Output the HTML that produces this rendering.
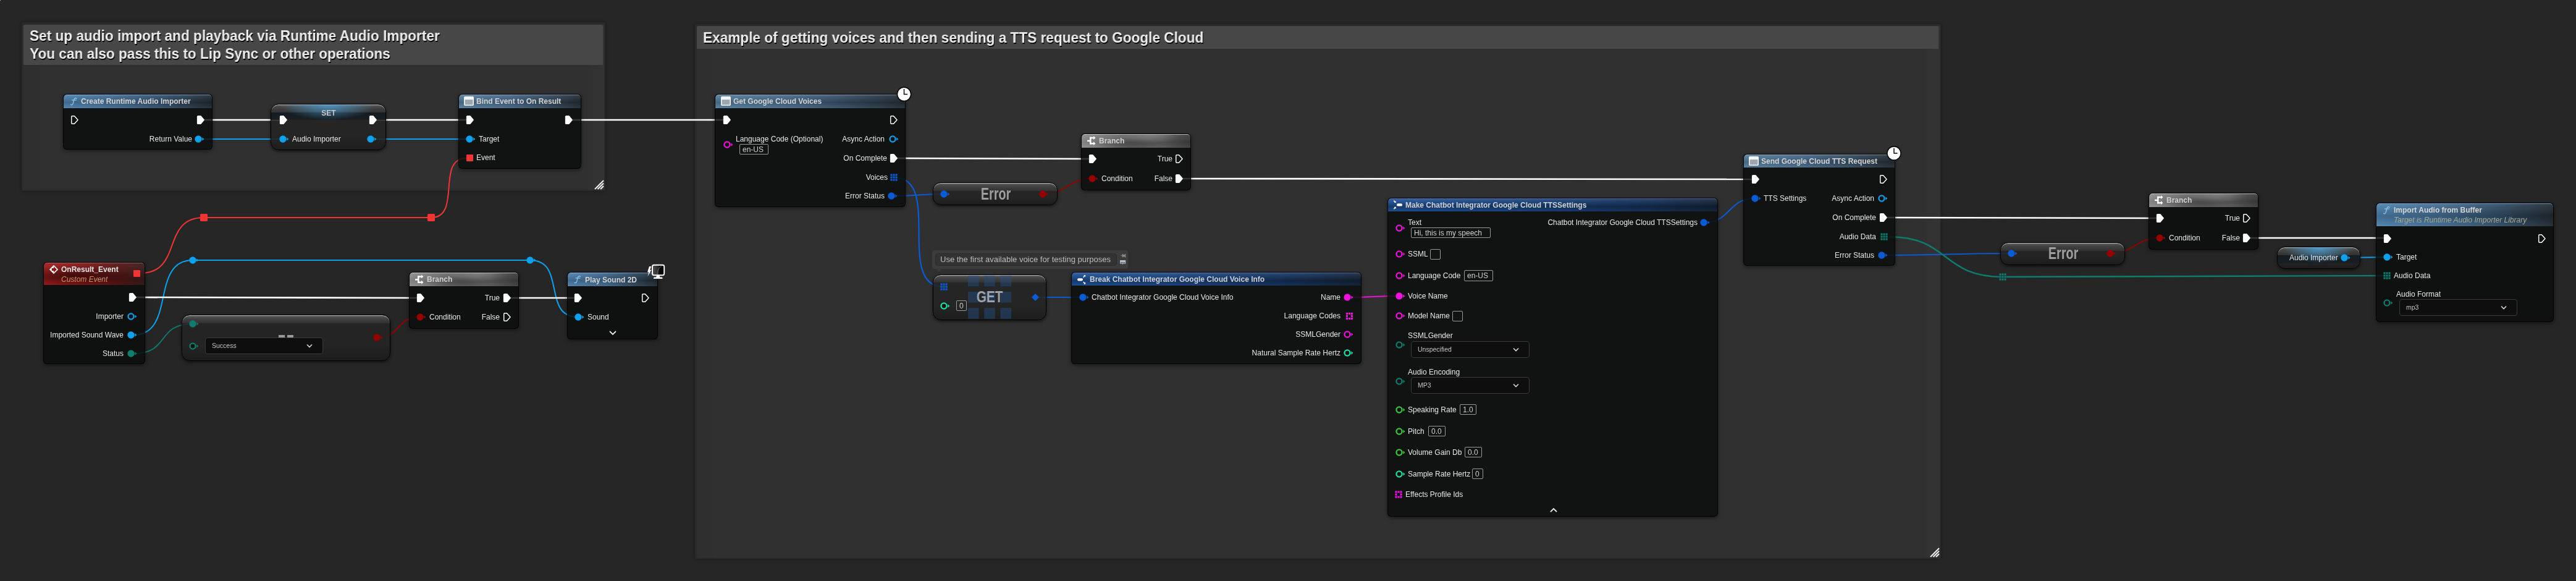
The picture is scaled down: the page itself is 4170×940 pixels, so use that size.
<!DOCTYPE html>
<html><head><meta charset="utf-8"><style>
*{box-sizing:border-box}
html,body{margin:0;padding:0}
body{width:4170px;height:940px;overflow:hidden;position:relative;background:#262626;font-family:"Liberation Sans",sans-serif}
.t{position:absolute;white-space:nowrap;will-change:transform}
.b{position:absolute}
.n{position:absolute;border-radius:6px;background:rgba(11,13,12,.83);border:1.5px solid rgba(0,0,0,.9);box-shadow:0 2px 6px rgba(0,0,0,.5);overflow:hidden}
.h{position:absolute;left:0;top:0;right:0;border-top:1px solid rgba(255,255,255,.28);border-radius:5px 5px 0 0}
.c{position:absolute;border:1px solid #000;box-shadow:inset 0 1.3px 0 rgba(225,225,225,.6),0 2px 5px rgba(0,0,0,.6);overflow:hidden}
.cg{position:absolute;left:0;top:0;right:0}
.cm{position:absolute;background:#2a2a2a;border-radius:2px;box-shadow:0 0 4px 1px rgba(0,0,0,.25)}
.cmb{position:absolute;background:linear-gradient(90deg,rgba(0,0,0,.03),rgba(0,0,0,0) 40px,rgba(255,255,255,0) calc(100% - 30px),rgba(255,255,255,.02)),#303030}
.cmh{position:absolute;background:#474747;border-radius:2px 2px 0 0}
.tb{position:absolute;border:1px solid #9a9a9a;border-radius:2px}
.dd{position:absolute;background:#0e0e0e;border:1px solid #3a3a3a;border-radius:4px}
.bub{position:absolute;background:#3c3c3c;border-radius:4px}
.bubi{position:absolute;background:#333;border:1px solid #2a2a2a;border-radius:4px}
</style></head>
<body>

<div class="cm" style="left:35px;top:36px;width:945px;height:273px;"><div class="cmb" style="left:2.0px;top:3.5px;right:2px;bottom:2px;"></div><div class="cmh" style="left:2.5px;top:3.5px;width:938.5px;height:65.0px;"></div></div><div class="cm" style="left:1125px;top:39px;width:2017px;height:865px;"><div class="cmb" style="left:2.5px;top:3px;right:2px;bottom:2px;"></div><div class="cmh" style="left:3px;top:3px;width:2010px;height:36.5px;"></div></div><svg width="4170" height="940" style="position:absolute;left:0;top:0"><path d="M331,194 L453,194" stroke="#ffffff" stroke-width="2.6" fill="none"/><path d="M610,194 L755,194" stroke="#ffffff" stroke-width="2.6" fill="none"/><path d="M927,194 L1171,194" stroke="#ffffff" stroke-width="2.6" fill="none"/><path d="M321,225 L458,225" stroke="#0ea2ee" stroke-width="2" fill="none"/><path d="M600,225 L760,225" stroke="#0ea2ee" stroke-width="2" fill="none"/><path d="M227,442 C297,442 260,352 330,352" stroke="#f03535" stroke-width="2" fill="none"/><path d="M330,352 L698,352" stroke="#f03535" stroke-width="2" fill="none"/><path d="M698,352 C748,352 705,256 755,256" stroke="#f03535" stroke-width="2" fill="none"/><path d="M216,542 C286,542 242,421 312,421" stroke="#0ea2ee" stroke-width="2" fill="none"/><path d="M312,421 L858,421" stroke="#0ea2ee" stroke-width="2" fill="none"/><path d="M858,421 C918,421 876,513 936,513" stroke="#0ea2ee" stroke-width="2" fill="none"/><path d="M221,481 L675,482" stroke="#ffffff" stroke-width="2.6" fill="none"/><path d="M827,482 L930,482" stroke="#ffffff" stroke-width="2.6" fill="none"/><path d="M216,572 C276,572 252,524 312,524" stroke="#0e7d6f" stroke-width="2" fill="none"/><path d="M610,546 C650,546 640,513 680,513" stroke="#940202" stroke-width="2" fill="none"/><path d="M1452,256 L1763,257" stroke="#ffffff" stroke-width="2.6" fill="none"/><path d="M1444,317 C1486.0,317 1486.0,314 1528,314" stroke="#0b5bd6" stroke-width="2" fill="none"/><path d="M1688,314 C1728,314 1728,289 1768,289" stroke="#940202" stroke-width="2" fill="none"/><path d="M1447,287 C1527,287 1448,464 1528,464" stroke="#0b5bd6" stroke-width="2.2" fill="none"/><path d="M1676,481 L1753,481" stroke="#0b5bd6" stroke-width="2" fill="none"/><path d="M2181,481 C2223.0,481 2223.0,479 2265,479" stroke="#ee12dc" stroke-width="2" fill="none"/><path d="M1915,289 L2836,290" stroke="#ffffff" stroke-width="2.6" fill="none"/><path d="M2758,360 C2803,360 2796,321 2841,321" stroke="#0b5bd6" stroke-width="2" fill="none"/><path d="M3055,352 L3491,353" stroke="#ffffff" stroke-width="2.6" fill="none"/><path d="M3046,413 C3151.0,413 3151.0,410 3256,410" stroke="#0b5bd6" stroke-width="2" fill="none"/><path d="M3416,410 C3456,410 3456,385 3496,385" stroke="#940202" stroke-width="2" fill="none"/><path d="M3057,383 C3157,383 3142,448 3242,448" stroke="#0e7d6f" stroke-width="2.4" fill="none"/><path d="M3242,448 L3864,446" stroke="#0e7d6f" stroke-width="2.4" fill="none"/><path d="M3643,385 L3859,385" stroke="#ffffff" stroke-width="2.6" fill="none"/><path d="M3795,417 L3864,416" stroke="#0ea2ee" stroke-width="2" fill="none"/></svg><div class="n" style="left:102px;top:152px;width:242px;height:90px;"><div class="h" style="height:21.5px;border-top-color:rgba(130,190,240,.75);background:linear-gradient(180deg,rgba(255,255,255,.07) 0%,rgba(0,0,0,.18) 55%,rgba(255,255,255,.03) 100%),linear-gradient(90deg,#4f82ad 0%,#41698e 40%,#2f4a62 72%,#222b33 100%);"></div></div><div class="c" style="left:438px;top:168px;width:187px;height:75px;border-radius:13px;background:linear-gradient(180deg,rgba(92,92,92,.93) 0px,rgba(66,66,66,.93) 5.9px,rgba(50,50,50,.93) 12.5px,rgba(36,36,36,.86) 13px,rgba(35,35,35,.86) 70%,rgba(27,27,27,.9) 100%);"><div class="cg" style="top:13px;height:12px;background:linear-gradient(180deg,rgba(18,26,32,.85),rgba(22,30,36,.8));"></div><div class="cg" style="height:25px;background:radial-gradient(ellipse 42% 100% at 50% 0%,rgba(80,165,220,.8),rgba(0,0,0,0) 100%);"></div></div><div class="n" style="left:742px;top:152px;width:199px;height:121px;"><div class="h" style="height:21.5px;border-top-color:rgba(170,200,225,.55);background:linear-gradient(180deg,rgba(255,255,255,.07) 0%,rgba(0,0,0,.18) 55%,rgba(255,255,255,.03) 100%),linear-gradient(90deg,#56809f 0%,#48698a 40%,#344b60 72%,#252d35 100%);"></div></div><div class="n" style="left:70px;top:424px;width:165px;height:165px;"><div class="h" style="height:36px;border-top-color:rgba(255,160,160,.45);background:radial-gradient(ellipse 55% 45% at 30% 55%,rgba(0,0,0,.45),rgba(0,0,0,0)),linear-gradient(180deg,rgba(255,255,255,.06) 0%,rgba(0,0,0,.2) 70%,rgba(0,0,0,.1) 100%),linear-gradient(90deg,#a21c1c 0%,#821616 40%,#561515 75%,#3a1c1c 100%);"></div></div><div class="c" style="left:294px;top:508.5px;width:338px;height:75px;border-radius:13px;background:linear-gradient(180deg,rgba(92,92,92,.93) 0px,rgba(66,66,66,.93) 6.1px,rgba(50,50,50,.93) 13.0px,rgba(36,36,36,.86) 13.5px,rgba(35,35,35,.86) 70%,rgba(27,27,27,.9) 100%);"></div><div class="dd" style="left:332px;top:546px;width:191px;height:27px;"></div><div class="n" style="left:662px;top:440px;width:178px;height:92px;"><div class="h" style="height:22px;border-top-color:rgba(235,235,235,.7);background:radial-gradient(ellipse 28% 70% at 63% 0%,rgba(255,255,255,.20),rgba(255,255,255,0)),radial-gradient(ellipse 30% 55% at 40% 75%,rgba(0,0,0,.22),rgba(0,0,0,0)),linear-gradient(180deg,rgba(255,255,255,.06) 0%,rgba(0,0,0,.08) 60%,rgba(255,255,255,.04) 100%),linear-gradient(90deg,#8e8e8e 0%,#747474 25%,#5c5c5c 50%,#555 75%,#3c3c3c 100%);"></div></div><div class="n" style="left:918px;top:440.3px;width:147px;height:109px;"><div class="h" style="height:21.5px;border-top-color:rgba(130,190,240,.75);background:linear-gradient(180deg,rgba(255,255,255,.07) 0%,rgba(0,0,0,.18) 55%,rgba(255,255,255,.03) 100%),linear-gradient(90deg,#4f82ad 0%,#41698e 40%,#2f4a62 72%,#222b33 100%);"></div></div><div class="n" style="left:1157px;top:152px;width:309px;height:183px;"><div class="h" style="height:21.5px;border-top-color:rgba(170,200,225,.55);background:linear-gradient(180deg,rgba(255,255,255,.07) 0%,rgba(0,0,0,.18) 55%,rgba(255,255,255,.03) 100%),linear-gradient(90deg,#56809f 0%,#48698a 40%,#344b60 72%,#252d35 100%);"></div></div><div class="tb" style="left:1197px;top:233px;width:47px;height:17px;"></div><div class="c" style="left:1509.5px;top:294.8px;width:202px;height:37px;border-radius:13px;background:linear-gradient(180deg,rgba(92,92,92,.93) 0px,rgba(66,66,66,.93) 6.1px,rgba(50,50,50,.93) 13.0px,rgba(36,36,36,.86) 13.5px,rgba(35,35,35,.86) 70%,rgba(27,27,27,.9) 100%);"></div><div class="n" style="left:1750px;top:216px;width:178px;height:92px;"><div class="h" style="height:21.5px;border-top-color:rgba(235,235,235,.7);background:radial-gradient(ellipse 28% 70% at 63% 0%,rgba(255,255,255,.20),rgba(255,255,255,0)),radial-gradient(ellipse 30% 55% at 40% 75%,rgba(0,0,0,.22),rgba(0,0,0,0)),linear-gradient(180deg,rgba(255,255,255,.06) 0%,rgba(0,0,0,.08) 60%,rgba(255,255,255,.04) 100%),linear-gradient(90deg,#8e8e8e 0%,#747474 25%,#5c5c5c 50%,#555 75%,#3c3c3c 100%);"></div></div><div class="bub" style="left:1509px;top:405px;width:317px;height:30px;"></div><div class="bubi" style="left:1514px;top:409.6px;width:293.5px;height:20.8px;"></div><div class="c" style="left:1510px;top:444.3px;width:184px;height:74px;border-radius:13px;background:linear-gradient(180deg,rgba(92,92,92,.93) 0px,rgba(66,66,66,.93) 5.6px,rgba(50,50,50,.93) 12.0px,rgba(36,36,36,.86) 12.5px,rgba(35,35,35,.86) 70%,rgba(27,27,27,.9) 100%);"></div><div class="tb" style="left:1548px;top:486px;width:17px;height:17px;"></div><div class="n" style="left:1734px;top:440px;width:470px;height:149px;"><div class="h" style="height:21px;border-top-color:rgba(120,160,220,.55);background:linear-gradient(180deg,rgba(255,255,255,.07) 0%,rgba(0,0,0,.32) 60%,rgba(0,0,0,.1) 100%),linear-gradient(90deg,#2256a0 0%,#1c4784 45%,#17355f 80%,#172840 100%);"></div></div><div class="n" style="left:2246px;top:320px;width:535px;height:516px;"><div class="h" style="height:20.5px;border-top-color:rgba(120,160,220,.55);background:linear-gradient(180deg,rgba(255,255,255,.07) 0%,rgba(0,0,0,.32) 60%,rgba(0,0,0,.1) 100%),linear-gradient(90deg,#2256a0 0%,#1c4784 45%,#17355f 80%,#172840 100%);"></div></div><div class="tb" style="left:2284px;top:368px;width:129px;height:17px;"></div><div class="tb" style="left:2315px;top:403px;width:17px;height:17px;"></div><div class="tb" style="left:2370px;top:437px;width:47px;height:18px;"></div><div class="tb" style="left:2351px;top:503px;width:17px;height:17px;"></div><div class="dd" style="left:2284px;top:552px;width:192px;height:27px;"></div><div class="dd" style="left:2284px;top:610px;width:192px;height:27px;"></div><div class="tb" style="left:2363px;top:654px;width:27px;height:17px;"></div><div class="tb" style="left:2312px;top:689px;width:28px;height:17px;"></div><div class="tb" style="left:2371px;top:723px;width:28px;height:17px;"></div><div class="tb" style="left:2383px;top:758px;width:18px;height:17px;"></div><div class="n" style="left:2822px;top:249px;width:246px;height:181px;"><div class="h" style="height:20.5px;border-top-color:rgba(170,200,225,.55);background:linear-gradient(180deg,rgba(255,255,255,.07) 0%,rgba(0,0,0,.18) 55%,rgba(255,255,255,.03) 100%),linear-gradient(90deg,#56809f 0%,#48698a 40%,#344b60 72%,#252d35 100%);"></div></div><div class="c" style="left:3238px;top:392px;width:201.5px;height:36.5px;border-radius:13px;background:linear-gradient(180deg,rgba(92,92,92,.93) 0px,rgba(66,66,66,.93) 6.1px,rgba(50,50,50,.93) 13.0px,rgba(36,36,36,.86) 13.5px,rgba(35,35,35,.86) 70%,rgba(27,27,27,.9) 100%);"></div><div class="n" style="left:3478px;top:312px;width:178px;height:92px;"><div class="h" style="height:21.5px;border-top-color:rgba(235,235,235,.7);background:radial-gradient(ellipse 28% 70% at 63% 0%,rgba(255,255,255,.20),rgba(255,255,255,0)),radial-gradient(ellipse 30% 55% at 40% 75%,rgba(0,0,0,.22),rgba(0,0,0,0)),linear-gradient(180deg,rgba(255,255,255,.06) 0%,rgba(0,0,0,.08) 60%,rgba(255,255,255,.04) 100%),linear-gradient(90deg,#8e8e8e 0%,#747474 25%,#5c5c5c 50%,#555 75%,#3c3c3c 100%);"></div></div><div class="c" style="left:3685.5px;top:398.5px;width:135px;height:36.5px;border-radius:13px;background:linear-gradient(180deg,rgba(92,92,92,.93) 0px,rgba(66,66,66,.93) 5.9px,rgba(50,50,50,.93) 12.5px,rgba(36,36,36,.86) 13px,rgba(35,35,35,.86) 70%,rgba(27,27,27,.9) 100%);"><div class="cg" style="top:13px;height:13px;background:linear-gradient(180deg,rgba(18,26,32,.85),rgba(22,30,36,.8));"></div><div class="cg" style="height:26px;background:radial-gradient(ellipse 42% 100% at 50% 0%,rgba(80,165,220,.85),rgba(0,0,0,0) 100%);"></div></div><div class="n" style="left:3846px;top:328px;width:288px;height:193px;"><div class="h" style="height:36.5px;border-top-color:rgba(130,190,240,.75);background:linear-gradient(180deg,rgba(255,255,255,.07) 0%,rgba(0,0,0,.18) 55%,rgba(255,255,255,.03) 100%),linear-gradient(90deg,#4f82ad 0%,#41698e 40%,#2f4a62 72%,#222b33 100%);"></div></div><div class="dd" style="left:3884px;top:484px;width:191px;height:27px;"></div><svg width="4170" height="940" style="position:absolute;left:0;top:0"><path d="M963.0,306.0 L977.0,292.0" stroke="#ececec" stroke-width="2.1" fill="none"/><path d="M967.5,306.0 L977.0,296.5" stroke="#ececec" stroke-width="2.1" fill="none"/><path d="M972.0,306.0 L977.0,301.0" stroke="#ececec" stroke-width="2.1" fill="none"/><path d="M3125.0,901.0 L3139.0,887.0" stroke="#ececec" stroke-width="2.1" fill="none"/><path d="M3129.5,901.0 L3139.0,891.5" stroke="#ececec" stroke-width="2.1" fill="none"/><path d="M3134.0,901.0 L3139.0,896.0" stroke="#ececec" stroke-width="2.1" fill="none"/><rect x="324" y="346" width="12" height="12" rx="1.5" fill="#f03535"/><rect x="692" y="346" width="12" height="12" rx="1.5" fill="#f03535"/><circle cx="312" cy="421" r="5.7" fill="#0ea2ee"/><path d="M318.4,418.3 L321.4,421.0 L318.4,423.7 z" fill="#0ea2ee"/><circle cx="858" cy="421" r="5.7" fill="#0ea2ee"/><path d="M864.4,418.3 L867.4,421.0 L864.4,423.7 z" fill="#0ea2ee"/><g transform="translate(114,158.5)" stroke="#86c6f4" fill="none" stroke-linecap="round"><path d="M10,0.9 C8.4,-0.3 6.4,0.3 5.8,3 L4.3,8.7 C3.7,11 2.1,11.7 0.6,10.9" stroke-width="1.35"/><path d="M2.4,3.3 H9.4" stroke-width="1.2"/></g><circle cx="{x0+10}" cy="{y0+1}" r="1.1" fill="#86c6f4"/><circle cx="{x0+0.8}" cy="{y0+10.8}" r="1.1" fill="#86c6f4"/><path d="M116.90,187.70 H120.40 L126.06,194.00 L120.40,200.30 H116.90 Q115.70,200.30 115.70,199.10 V188.90 Q115.70,187.70 116.90,187.70 z" fill="none" stroke="#fff" stroke-width="1.45" stroke-linejoin="round"/><path d="M320.50,186.90 H324.50 Q325.20,186.90 325.70,187.50 L331.10,194.00 L325.70,200.50 Q325.20,201.10 324.50,201.10 H320.50 Q318.90,201.10 318.90,199.50 V188.50 Q318.90,186.90 320.50,186.90 z" fill="#fff"/><circle cx="321" cy="225" r="5.7" fill="#0ea2ee"/><path d="M327.4,222.3 L330.4,225.0 L327.4,227.7 z" fill="#0ea2ee"/><path d="M454.50,186.90 H458.50 Q459.20,186.90 459.70,187.50 L465.10,194.00 L459.70,200.50 Q459.20,201.10 458.50,201.10 H454.50 Q452.90,201.10 452.90,199.50 V188.50 Q452.90,186.90 454.50,186.90 z" fill="#fff"/><path d="M599.50,186.90 H603.50 Q604.20,186.90 604.70,187.50 L610.10,194.00 L604.70,200.50 Q604.20,201.10 603.50,201.10 H599.50 Q597.90,201.10 597.90,199.50 V188.50 Q597.90,186.90 599.50,186.90 z" fill="#fff"/><circle cx="458" cy="225" r="5.7" fill="#0ea2ee"/><path d="M464.4,222.3 L467.4,225.0 L464.4,227.7 z" fill="#0ea2ee"/><circle cx="600" cy="225" r="5.7" fill="#0ea2ee"/><path d="M606.4,222.3 L609.4,225.0 L606.4,227.7 z" fill="#0ea2ee"/><rect x="751.8" y="156.8" width="14.4" height="13.4" rx="1" fill="#9aa6b0" stroke="#f4f4f4" stroke-width="1.6"/><rect x="752" y="157" width="14" height="4.2" fill="#f4f4f4"/><path d="M756.50,186.90 H760.50 Q761.20,186.90 761.70,187.50 L767.10,194.00 L761.70,200.50 Q761.20,201.10 760.50,201.10 H756.50 Q754.90,201.10 754.90,199.50 V188.50 Q754.90,186.90 756.50,186.90 z" fill="#fff"/><path d="M916.50,186.90 H920.50 Q921.20,186.90 921.70,187.50 L927.10,194.00 L921.70,200.50 Q921.20,201.10 920.50,201.10 H916.50 Q914.90,201.10 914.90,199.50 V188.50 Q914.90,186.90 916.50,186.90 z" fill="#fff"/><circle cx="760" cy="225" r="5.7" fill="#0ea2ee"/><path d="M766.4,222.3 L769.4,225.0 L766.4,227.7 z" fill="#0ea2ee"/><rect x="755" y="250" width="11" height="11" rx="1" fill="#f03535"/><path d="M79.8,436 L87,428.8 L94.2,436 L87,443.2 z" fill="#f2f2f2"/><path d="M83.8,434 H87 V431.3 L91.9,436 L87,440.7 V438 H83.8 z" fill="#8a1414"/><rect x="216" y="437" width="11" height="11" rx="1" fill="#f03535"/><path d="M210.50,473.90 H214.50 Q215.20,473.90 215.70,474.50 L221.10,481.00 L215.70,487.50 Q215.20,488.10 214.50,488.10 H210.50 Q208.90,488.10 208.90,486.50 V475.50 Q208.90,473.90 210.50,473.90 z" fill="#fff"/><circle cx="212" cy="512" r="4.550000000000001" fill="#111" stroke="#0ea2ee" stroke-width="2.3"/><path d="M218.4,509.3 L221.4,512.0 L218.4,514.7 z" fill="#0ea2ee"/><circle cx="212" cy="542" r="5.7" fill="#0ea2ee"/><path d="M218.4,539.3 L221.4,542.0 L218.4,544.7 z" fill="#0ea2ee"/><circle cx="212" cy="572" r="5.7" fill="#0e7d6f"/><path d="M218.4,569.3 L221.4,572.0 L218.4,574.7 z" fill="#0e7d6f"/><rect x="451" y="542" width="10" height="4" fill="#9a9a9a"/><rect x="465" y="542" width="10" height="4" fill="#9a9a9a"/><circle cx="312" cy="524" r="5.7" fill="#0e7d6f"/><path d="M318.4,521.3 L321.4,524.0 L318.4,526.7 z" fill="#0e7d6f"/><circle cx="312" cy="560" r="4.550000000000001" fill="#111" stroke="#0e7d6f" stroke-width="2.3"/><path d="M318.4,557.3 L321.4,560.0 L318.4,562.7 z" fill="#0e7d6f"/><path d="M497,557.5 L501,561.5 L505,557.5" stroke="#d8d8d8" stroke-width="1.6" fill="none"/><circle cx="610" cy="546" r="5.7" fill="#940202"/><path d="M616.4,543.3 L619.4,546.0 L616.4,548.7 z" fill="#940202"/><g transform="translate(672,444.5)" fill="#fff"><rect x="0" y="6.7" width="5" height="2.4"/><rect x="4" y="1.8" width="2.5" height="11.6"/><rect x="4" y="1.8" width="6.6" height="2.4"/><path d="M10,-0.1 L13.5,3 L10,6.1 z"/><rect x="4" y="11" width="6.6" height="2.4"/><path d="M10,9.1 L13.5,12.2 L10,15.3 z"/></g><path d="M676.50,474.90 H680.50 Q681.20,474.90 681.70,475.50 L687.10,482.00 L681.70,488.50 Q681.20,489.10 680.50,489.10 H676.50 Q674.90,489.10 674.90,487.50 V476.50 Q674.90,474.90 676.50,474.90 z" fill="#fff"/><path d="M816.50,474.90 H820.50 Q821.20,474.90 821.70,475.50 L827.10,482.00 L821.70,488.50 Q821.20,489.10 820.50,489.10 H816.50 Q814.90,489.10 814.90,487.50 V476.50 Q814.90,474.90 816.50,474.90 z" fill="#fff"/><circle cx="680" cy="513" r="5.7" fill="#940202"/><path d="M686.4,510.3 L689.4,513.0 L686.4,515.7 z" fill="#940202"/><path d="M816.90,506.70 H820.40 L826.06,513.00 L820.40,519.30 H816.90 Q815.70,519.30 815.70,518.10 V507.90 Q815.70,506.70 816.90,506.70 z" fill="none" stroke="#fff" stroke-width="1.45" stroke-linejoin="round"/><g transform="translate(929.5,446.5)" stroke="#86c6f4" fill="none" stroke-linecap="round"><path d="M10,0.9 C8.4,-0.3 6.4,0.3 5.8,3 L4.3,8.7 C3.7,11 2.1,11.7 0.6,10.9" stroke-width="1.35"/><path d="M2.4,3.3 H9.4" stroke-width="1.2"/></g><circle cx="{x0+10}" cy="{y0+1}" r="1.1" fill="#86c6f4"/><circle cx="{x0+0.8}" cy="{y0+10.8}" r="1.1" fill="#86c6f4"/><path d="M931.50,474.90 H935.50 Q936.20,474.90 936.70,475.50 L942.10,482.00 L936.70,488.50 Q936.20,489.10 935.50,489.10 H931.50 Q929.90,489.10 929.90,487.50 V476.50 Q929.90,474.90 931.50,474.90 z" fill="#fff"/><path d="M1040.90,475.70 H1044.40 L1050.06,482.00 L1044.40,488.30 H1040.90 Q1039.70,488.30 1039.70,487.10 V476.90 Q1039.70,475.70 1040.90,475.70 z" fill="none" stroke="#fff" stroke-width="1.45" stroke-linejoin="round"/><circle cx="936" cy="513" r="5.7" fill="#0ea2ee"/><path d="M942.4,510.3 L945.4,513.0 L942.4,515.7 z" fill="#0ea2ee"/><path d="M987,536 L992,541 L997,536" stroke="#e8e8e8" stroke-width="1.8" fill="none"/><defs><linearGradient id="scr" x1="0" y1="0" x2="1" y2="0"><stop offset="0" stop-color="#555"/><stop offset="0.55" stop-color="#222"/><stop offset="0.56" stop-color="#000"/></linearGradient></defs><rect x="1056" y="428.8" width="19.2" height="16.4" rx="2.6" fill="url(#scr)" stroke="#fff" stroke-width="2"/><path d="M1064,444 C1064,438 1066,433 1071,430.5" stroke="#777" stroke-width="0.9" fill="none"/><path d="M1063,446 L1062,448.6 H1059 Q1058,448.8 1058,450 V451 H1072.5 V450 Q1072.5,448.8 1071.5,448.6 H1068.5 L1067.5,446 z" fill="#fff"/><path d="M1051,431 H1054.3 L1052.2,436.8 H1054.5 L1048.4,447.2 L1050.3,440.2 H1048 z" fill="#fff"/><rect x="1167.8" y="156.8" width="14.4" height="13.4" rx="1" fill="#9aa6b0" stroke="#f4f4f4" stroke-width="1.6"/><rect x="1168" y="157" width="14" height="4.2" fill="#f4f4f4"/><circle cx="1463.5" cy="152.4" r="11.2" fill="#fff" stroke="#0a0a0a" stroke-width="1.7"/><path d="M1463.5,144.1 V152.4 H1469.1" stroke="#0a0a0a" stroke-width="1.5" fill="none"/><path d="M1172.50,186.90 H1176.50 Q1177.20,186.90 1177.70,187.50 L1183.10,194.00 L1177.70,200.50 Q1177.20,201.10 1176.50,201.10 H1172.50 Q1170.90,201.10 1170.90,199.50 V188.50 Q1170.90,186.90 1172.50,186.90 z" fill="#fff"/><path d="M1442.90,187.70 H1446.40 L1452.06,194.00 L1446.40,200.30 H1442.90 Q1441.70,200.30 1441.70,199.10 V188.90 Q1441.70,187.70 1442.90,187.70 z" fill="none" stroke="#fff" stroke-width="1.45" stroke-linejoin="round"/><circle cx="1177" cy="234" r="4.550000000000001" fill="#111" stroke="#ee12dc" stroke-width="2.3"/><path d="M1183.4,231.3 L1186.4,234.0 L1183.4,236.7 z" fill="#ee12dc"/><circle cx="1445" cy="225" r="4.550000000000001" fill="#111" stroke="#0ea2ee" stroke-width="2.3"/><path d="M1451.4,222.3 L1454.4,225.0 L1451.4,227.7 z" fill="#0ea2ee"/><path d="M1442.50,248.90 H1446.50 Q1447.20,248.90 1447.70,249.50 L1453.10,256.00 L1447.70,262.50 Q1447.20,263.10 1446.50,263.10 H1442.50 Q1440.90,263.10 1440.90,261.50 V250.50 Q1440.90,248.90 1442.50,248.90 z" fill="#fff"/><rect x="1441.40" y="281.40" width="3.1" height="3.1" fill="#0b5bd6"/><rect x="1441.40" y="285.45" width="3.1" height="3.1" fill="#0b5bd6"/><rect x="1441.40" y="289.50" width="3.1" height="3.1" fill="#0b5bd6"/><rect x="1445.45" y="281.40" width="3.1" height="3.1" fill="#0b5bd6"/><rect x="1445.45" y="285.45" width="3.1" height="3.1" fill="#0b5bd6"/><rect x="1445.45" y="289.50" width="3.1" height="3.1" fill="#0b5bd6"/><rect x="1449.50" y="281.40" width="3.1" height="3.1" fill="#0b5bd6"/><rect x="1449.50" y="285.45" width="3.1" height="3.1" fill="#0b5bd6"/><rect x="1449.50" y="289.50" width="3.1" height="3.1" fill="#0b5bd6"/><circle cx="1443" cy="317" r="5.7" fill="#0b5bd6"/><path d="M1449.4,314.3 L1452.4,317.0 L1449.4,319.7 z" fill="#0b5bd6"/><circle cx="1528" cy="314" r="5.7" fill="#0b5bd6"/><path d="M1534.4,311.3 L1537.4,314.0 L1534.4,316.7 z" fill="#0b5bd6"/><circle cx="1688" cy="314" r="5.7" fill="#940202"/><path d="M1694.4,311.3 L1697.4,314.0 L1694.4,316.7 z" fill="#940202"/><g transform="translate(1760,220)" fill="#fff"><rect x="0" y="6.7" width="5" height="2.4"/><rect x="4" y="1.8" width="2.5" height="11.6"/><rect x="4" y="1.8" width="6.6" height="2.4"/><path d="M10,-0.1 L13.5,3 L10,6.1 z"/><rect x="4" y="11" width="6.6" height="2.4"/><path d="M10,9.1 L13.5,12.2 L10,15.3 z"/></g><path d="M1764.50,249.90 H1768.50 Q1769.20,249.90 1769.70,250.50 L1775.10,257.00 L1769.70,263.50 Q1769.20,264.10 1768.50,264.10 H1764.50 Q1762.90,264.10 1762.90,262.50 V251.50 Q1762.90,249.90 1764.50,249.90 z" fill="#fff"/><path d="M1904.90,250.70 H1908.40 L1914.06,257.00 L1908.40,263.30 H1904.90 Q1903.70,263.30 1903.70,262.10 V251.90 Q1903.70,250.70 1904.90,250.70 z" fill="none" stroke="#fff" stroke-width="1.45" stroke-linejoin="round"/><circle cx="1768" cy="289" r="5.7" fill="#940202"/><path d="M1774.4,286.3 L1777.4,289.0 L1774.4,291.7 z" fill="#940202"/><path d="M1904.50,281.90 H1908.50 Q1909.20,281.90 1909.70,282.50 L1915.10,289.00 L1909.70,295.50 Q1909.20,296.10 1908.50,296.10 H1904.50 Q1902.90,296.10 1902.90,294.50 V283.50 Q1902.90,281.90 1904.50,281.90 z" fill="#fff"/><path d="M1515,434 L1520,440 L1525,434 z" fill="#3a3a3a"/><path d="M1813.2,413.6 L1816.5,413 L1817,410.6 L1819.5,412.5 L1822.2,410.3 L1822.2,417 L1819.5,414.8 L1817,416.8 L1816.5,414.3 z" fill="#8a8a8a"/><rect x="1813" y="421" width="9.2" height="5.6" fill="#b8c0c8"/><rect x="1814.3" y="424" width="1.6" height="1.6" fill="#445"/><rect x="1816.8" y="424" width="1.6" height="1.6" fill="#445"/><rect x="1819.3" y="424" width="1.6" height="1.6" fill="#445"/><path d="M1816.4,426.6 L1817.2,428.2 L1818,426.6 z" fill="#b8c0c8"/><rect x="1567.0" y="445.8" width="17.6" height="17.5" fill="#23508a" opacity="0.45"/><rect x="1567.0" y="472.0" width="17.6" height="17.5" fill="#23508a" opacity="0.45"/><rect x="1567.0" y="498.2" width="17.6" height="17.5" fill="#23508a" opacity="0.45"/><rect x="1593.2" y="445.8" width="17.6" height="17.5" fill="#23508a" opacity="0.45"/><rect x="1593.2" y="498.2" width="17.6" height="17.5" fill="#23508a" opacity="0.45"/><rect x="1619.4" y="445.8" width="17.6" height="17.5" fill="#23508a" opacity="0.45"/><rect x="1619.4" y="472.0" width="17.6" height="17.5" fill="#23508a" opacity="0.45"/><rect x="1619.4" y="498.2" width="17.6" height="17.5" fill="#23508a" opacity="0.45"/><rect x="1593.2" y="472" width="17.6" height="17.5" fill="#23508a" opacity="0.45"/><rect x="1522.40" y="458.40" width="3.1" height="3.1" fill="#0b5bd6"/><rect x="1522.40" y="462.45" width="3.1" height="3.1" fill="#0b5bd6"/><rect x="1522.40" y="466.50" width="3.1" height="3.1" fill="#0b5bd6"/><rect x="1526.45" y="458.40" width="3.1" height="3.1" fill="#0b5bd6"/><rect x="1526.45" y="462.45" width="3.1" height="3.1" fill="#0b5bd6"/><rect x="1526.45" y="466.50" width="3.1" height="3.1" fill="#0b5bd6"/><rect x="1530.50" y="458.40" width="3.1" height="3.1" fill="#0b5bd6"/><rect x="1530.50" y="462.45" width="3.1" height="3.1" fill="#0b5bd6"/><rect x="1530.50" y="466.50" width="3.1" height="3.1" fill="#0b5bd6"/><circle cx="1528" cy="495" r="4.550000000000001" fill="#111" stroke="#1fdda4" stroke-width="2.3"/><path d="M1534.4,492.3 L1537.4,495.0 L1534.4,497.7 z" fill="#1fdda4"/><path d="M1676,475 L1682,481 L1676,487 L1670,481 z" fill="#0b5bd6"/><g transform="translate(1744,450.2)"><rect x="0" y="0" width="9" height="4.2" rx="2.1" fill="#fff"/><path d="M9.6,-1.6 L12.4,-4.4 M9.6,5.8 L12.4,8.6" stroke="#fff" stroke-width="1.5"/><path d="M13.2,-5.3 L13.2,-2.2 L10.1,-5.3 z M13.2,9.5 L13.2,6.4 L10.1,9.5 z" fill="#fff"/></g><circle cx="1753" cy="481" r="5.7" fill="#0b5bd6"/><path d="M1759.4,478.3 L1762.4,481.0 L1759.4,483.7 z" fill="#0b5bd6"/><circle cx="2181" cy="481" r="5.7" fill="#ee12dc"/><path d="M2187.4,478.3 L2190.4,481.0 L2187.4,483.7 z" fill="#ee12dc"/><rect x="2178.90" y="505.80" width="3.1" height="3.1" fill="#ee12dc"/><rect x="2178.90" y="509.85" width="3.1" height="3.1" fill="#ee12dc"/><rect x="2178.90" y="513.90" width="3.1" height="3.1" fill="#ee12dc"/><rect x="2182.95" y="505.80" width="3.1" height="3.1" fill="#ee12dc"/><rect x="2182.95" y="513.90" width="3.1" height="3.1" fill="#ee12dc"/><rect x="2187.00" y="505.80" width="3.1" height="3.1" fill="#ee12dc"/><rect x="2187.00" y="509.85" width="3.1" height="3.1" fill="#ee12dc"/><rect x="2187.00" y="513.90" width="3.1" height="3.1" fill="#ee12dc"/><circle cx="2181" cy="541" r="4.550000000000001" fill="#111" stroke="#ee12dc" stroke-width="2.3"/><path d="M2187.4,538.3 L2190.4,541.0 L2187.4,543.7 z" fill="#ee12dc"/><circle cx="2181" cy="571" r="4.550000000000001" fill="#111" stroke="#1fdda4" stroke-width="2.3"/><path d="M2187.4,568.3 L2190.4,571.0 L2187.4,573.7 z" fill="#1fdda4"/><g transform="translate(2256,329.2)"><rect x="5" y="0" width="9" height="4.4" rx="2.2" fill="#fff"/><path d="M0.2,-4.6 L2.8,-2 M0.2,9 L2.8,6.4" stroke="#fff" stroke-width="1.5"/><path d="M3.7,-1.1 L3.7,-4.3 L0.6,-1.1 z M3.7,5.5 L3.7,8.7 L0.6,5.5 z" fill="#fff"/></g><circle cx="2758" cy="360" r="5.7" fill="#0b5bd6"/><path d="M2764.4,357.3 L2767.4,360.0 L2764.4,362.7 z" fill="#0b5bd6"/><circle cx="2265" cy="369" r="4.550000000000001" fill="#111" stroke="#ee12dc" stroke-width="2.3"/><path d="M2271.4,366.3 L2274.4,369.0 L2271.4,371.7 z" fill="#ee12dc"/><circle cx="2265" cy="411" r="4.550000000000001" fill="#111" stroke="#ee12dc" stroke-width="2.3"/><path d="M2271.4,408.3 L2274.4,411.0 L2271.4,413.7 z" fill="#ee12dc"/><circle cx="2265" cy="446" r="4.550000000000001" fill="#111" stroke="#ee12dc" stroke-width="2.3"/><path d="M2271.4,443.3 L2274.4,446.0 L2271.4,448.7 z" fill="#ee12dc"/><circle cx="2265" cy="479" r="5.7" fill="#ee12dc"/><path d="M2271.4,476.3 L2274.4,479.0 L2271.4,481.7 z" fill="#ee12dc"/><circle cx="2265" cy="511" r="4.550000000000001" fill="#111" stroke="#ee12dc" stroke-width="2.3"/><path d="M2271.4,508.3 L2274.4,511.0 L2271.4,513.7 z" fill="#ee12dc"/><circle cx="2265" cy="558" r="4.550000000000001" fill="#111" stroke="#0e7d6f" stroke-width="2.3"/><path d="M2271.4,555.3 L2274.4,558.0 L2271.4,560.7 z" fill="#0e7d6f"/><path d="M2450,563.5 L2454,567.5 L2458,563.5" stroke="#d8d8d8" stroke-width="1.6" fill="none"/><circle cx="2265" cy="617" r="4.550000000000001" fill="#111" stroke="#0e7d6f" stroke-width="2.3"/><path d="M2271.4,614.3 L2274.4,617.0 L2271.4,619.7 z" fill="#0e7d6f"/><path d="M2450,621.5 L2454,625.5 L2458,621.5" stroke="#d8d8d8" stroke-width="1.6" fill="none"/><circle cx="2265" cy="663" r="4.550000000000001" fill="#111" stroke="#3ec43a" stroke-width="2.3"/><path d="M2271.4,660.3 L2274.4,663.0 L2271.4,665.7 z" fill="#3ec43a"/><circle cx="2265" cy="698" r="4.550000000000001" fill="#111" stroke="#3ec43a" stroke-width="2.3"/><path d="M2271.4,695.3 L2274.4,698.0 L2271.4,700.7 z" fill="#3ec43a"/><circle cx="2265" cy="732" r="4.550000000000001" fill="#111" stroke="#3ec43a" stroke-width="2.3"/><path d="M2271.4,729.3 L2274.4,732.0 L2271.4,734.7 z" fill="#3ec43a"/><circle cx="2265" cy="767" r="4.550000000000001" fill="#111" stroke="#1fdda4" stroke-width="2.3"/><path d="M2271.4,764.3 L2274.4,767.0 L2271.4,769.7 z" fill="#1fdda4"/><rect x="2258.40" y="794.40" width="3.1" height="3.1" fill="#ee12dc"/><rect x="2258.40" y="798.45" width="3.1" height="3.1" fill="#ee12dc"/><rect x="2258.40" y="802.50" width="3.1" height="3.1" fill="#ee12dc"/><rect x="2262.45" y="794.40" width="3.1" height="3.1" fill="#ee12dc"/><rect x="2262.45" y="802.50" width="3.1" height="3.1" fill="#ee12dc"/><rect x="2266.50" y="794.40" width="3.1" height="3.1" fill="#ee12dc"/><rect x="2266.50" y="798.45" width="3.1" height="3.1" fill="#ee12dc"/><rect x="2266.50" y="802.50" width="3.1" height="3.1" fill="#ee12dc"/><path d="M2510,828 L2515,823 L2520,828" stroke="#e8e8e8" stroke-width="1.8" fill="none"/><rect x="2831.8" y="253.8" width="14.4" height="13.4" rx="1" fill="#9aa6b0" stroke="#f4f4f4" stroke-width="1.6"/><rect x="2832" y="254" width="14" height="4.2" fill="#f4f4f4"/><circle cx="3066" cy="248" r="11.2" fill="#fff" stroke="#0a0a0a" stroke-width="1.7"/><path d="M3066,239.7 V248 H3071.6" stroke="#0a0a0a" stroke-width="1.5" fill="none"/><path d="M2837.50,282.90 H2841.50 Q2842.20,282.90 2842.70,283.50 L2848.10,290.00 L2842.70,296.50 Q2842.20,297.10 2841.50,297.10 H2837.50 Q2835.90,297.10 2835.90,295.50 V284.50 Q2835.90,282.90 2837.50,282.90 z" fill="#fff"/><path d="M3044.90,283.70 H3048.40 L3054.06,290.00 L3048.40,296.30 H3044.90 Q3043.70,296.30 3043.70,295.10 V284.90 Q3043.70,283.70 3044.90,283.70 z" fill="none" stroke="#fff" stroke-width="1.45" stroke-linejoin="round"/><circle cx="2841" cy="321" r="5.7" fill="#0b5bd6"/><path d="M2847.4,318.3 L2850.4,321.0 L2847.4,323.7 z" fill="#0b5bd6"/><circle cx="3046" cy="321" r="4.550000000000001" fill="#111" stroke="#0ea2ee" stroke-width="2.3"/><path d="M3052.4,318.3 L3055.4,321.0 L3052.4,323.7 z" fill="#0ea2ee"/><path d="M3044.50,344.90 H3048.50 Q3049.20,344.90 3049.70,345.50 L3055.10,352.00 L3049.70,358.50 Q3049.20,359.10 3048.50,359.10 H3044.50 Q3042.90,359.10 3042.90,357.50 V346.50 Q3042.90,344.90 3044.50,344.90 z" fill="#fff"/><rect x="3044.40" y="377.40" width="3.1" height="3.1" fill="#0e7d6f"/><rect x="3044.40" y="381.45" width="3.1" height="3.1" fill="#0e7d6f"/><rect x="3044.40" y="385.50" width="3.1" height="3.1" fill="#0e7d6f"/><rect x="3048.45" y="377.40" width="3.1" height="3.1" fill="#0e7d6f"/><rect x="3048.45" y="381.45" width="3.1" height="3.1" fill="#0e7d6f"/><rect x="3048.45" y="385.50" width="3.1" height="3.1" fill="#0e7d6f"/><rect x="3052.50" y="377.40" width="3.1" height="3.1" fill="#0e7d6f"/><rect x="3052.50" y="381.45" width="3.1" height="3.1" fill="#0e7d6f"/><rect x="3052.50" y="385.50" width="3.1" height="3.1" fill="#0e7d6f"/><circle cx="3046" cy="413" r="5.7" fill="#0b5bd6"/><path d="M3052.4,410.3 L3055.4,413.0 L3052.4,415.7 z" fill="#0b5bd6"/><circle cx="3256" cy="410" r="5.7" fill="#0b5bd6"/><path d="M3262.4,407.3 L3265.4,410.0 L3262.4,412.7 z" fill="#0b5bd6"/><circle cx="3416" cy="410" r="5.7" fill="#940202"/><path d="M3422.4,407.3 L3425.4,410.0 L3422.4,412.7 z" fill="#940202"/><rect x="3236" y="442" width="12" height="12" fill="#262626"/><rect x="3236.40" y="442.40" width="3.1" height="3.1" fill="#0e7d6f"/><rect x="3236.40" y="446.45" width="3.1" height="3.1" fill="#0e7d6f"/><rect x="3236.40" y="450.50" width="3.1" height="3.1" fill="#0e7d6f"/><rect x="3240.45" y="442.40" width="3.1" height="3.1" fill="#0e7d6f"/><rect x="3240.45" y="446.45" width="3.1" height="3.1" fill="#0e7d6f"/><rect x="3240.45" y="450.50" width="3.1" height="3.1" fill="#0e7d6f"/><rect x="3244.50" y="442.40" width="3.1" height="3.1" fill="#0e7d6f"/><rect x="3244.50" y="446.45" width="3.1" height="3.1" fill="#0e7d6f"/><rect x="3244.50" y="450.50" width="3.1" height="3.1" fill="#0e7d6f"/><g transform="translate(3488,316)" fill="#fff"><rect x="0" y="6.7" width="5" height="2.4"/><rect x="4" y="1.8" width="2.5" height="11.6"/><rect x="4" y="1.8" width="6.6" height="2.4"/><path d="M10,-0.1 L13.5,3 L10,6.1 z"/><rect x="4" y="11" width="6.6" height="2.4"/><path d="M10,9.1 L13.5,12.2 L10,15.3 z"/></g><path d="M3492.50,345.90 H3496.50 Q3497.20,345.90 3497.70,346.50 L3503.10,353.00 L3497.70,359.50 Q3497.20,360.10 3496.50,360.10 H3492.50 Q3490.90,360.10 3490.90,358.50 V347.50 Q3490.90,345.90 3492.50,345.90 z" fill="#fff"/><path d="M3632.90,346.70 H3636.40 L3642.06,353.00 L3636.40,359.30 H3632.90 Q3631.70,359.30 3631.70,358.10 V347.90 Q3631.70,346.70 3632.90,346.70 z" fill="none" stroke="#fff" stroke-width="1.45" stroke-linejoin="round"/><circle cx="3496" cy="385" r="5.7" fill="#940202"/><path d="M3502.4,382.3 L3505.4,385.0 L3502.4,387.7 z" fill="#940202"/><path d="M3632.50,377.90 H3636.50 Q3637.20,377.90 3637.70,378.50 L3643.10,385.00 L3637.70,391.50 Q3637.20,392.10 3636.50,392.10 H3632.50 Q3630.90,392.10 3630.90,390.50 V379.50 Q3630.90,377.90 3632.50,377.90 z" fill="#fff"/><circle cx="3795" cy="417" r="5.7" fill="#0ea2ee"/><path d="M3801.4,414.3 L3804.4,417.0 L3801.4,419.7 z" fill="#0ea2ee"/><g transform="translate(3858,334.5)" stroke="#86c6f4" fill="none" stroke-linecap="round"><path d="M10,0.9 C8.4,-0.3 6.4,0.3 5.8,3 L4.3,8.7 C3.7,11 2.1,11.7 0.6,10.9" stroke-width="1.35"/><path d="M2.4,3.3 H9.4" stroke-width="1.2"/></g><circle cx="{x0+10}" cy="{y0+1}" r="1.1" fill="#86c6f4"/><circle cx="{x0+0.8}" cy="{y0+10.8}" r="1.1" fill="#86c6f4"/><path d="M3860.50,378.90 H3864.50 Q3865.20,378.90 3865.70,379.50 L3871.10,386.00 L3865.70,392.50 Q3865.20,393.10 3864.50,393.10 H3860.50 Q3858.90,393.10 3858.90,391.50 V380.50 Q3858.90,378.90 3860.50,378.90 z" fill="#fff"/><path d="M4110.90,379.70 H4114.40 L4120.06,386.00 L4114.40,392.30 H4110.90 Q4109.70,392.30 4109.70,391.10 V380.90 Q4109.70,379.70 4110.90,379.70 z" fill="none" stroke="#fff" stroke-width="1.45" stroke-linejoin="round"/><circle cx="3864" cy="416" r="5.7" fill="#0ea2ee"/><path d="M3870.4,413.3 L3873.4,416.0 L3870.4,418.7 z" fill="#0ea2ee"/><rect x="3858.40" y="440.40" width="3.1" height="3.1" fill="#0e7d6f"/><rect x="3858.40" y="444.45" width="3.1" height="3.1" fill="#0e7d6f"/><rect x="3858.40" y="448.50" width="3.1" height="3.1" fill="#0e7d6f"/><rect x="3862.45" y="440.40" width="3.1" height="3.1" fill="#0e7d6f"/><rect x="3862.45" y="444.45" width="3.1" height="3.1" fill="#0e7d6f"/><rect x="3862.45" y="448.50" width="3.1" height="3.1" fill="#0e7d6f"/><rect x="3866.50" y="440.40" width="3.1" height="3.1" fill="#0e7d6f"/><rect x="3866.50" y="444.45" width="3.1" height="3.1" fill="#0e7d6f"/><rect x="3866.50" y="448.50" width="3.1" height="3.1" fill="#0e7d6f"/><circle cx="3864" cy="490" r="4.550000000000001" fill="#111" stroke="#0e7d6f" stroke-width="2.3"/><path d="M3870.4,487.3 L3873.4,490.0 L3870.4,492.7 z" fill="#0e7d6f"/><path d="M4049,495.5 L4053,499.5 L4057,495.5" stroke="#d8d8d8" stroke-width="1.6" fill="none"/></svg><div class="t" style="top:49.1px;font-size:23px;line-height:23px;color:#0a0a0a;font-weight:700;left:49.3px;transform:scaleX(0.983);transform-origin:left center;filter:blur(0.3px);">Set up audio import and playback via Runtime Audio Importer</div><div class="t" style="top:47.3px;font-size:23px;line-height:23px;color:#ececec;font-weight:700;left:47.5px;transform:scaleX(0.983);transform-origin:left center;">Set up audio import and playback via Runtime Audio Importer</div><div class="t" style="top:78.1px;font-size:23px;line-height:23px;color:#0a0a0a;font-weight:700;left:49.3px;transform:scaleX(0.983);transform-origin:left center;filter:blur(0.3px);">You can also pass this to Lip Sync or other operations</div><div class="t" style="top:76.3px;font-size:23px;line-height:23px;color:#ececec;font-weight:700;left:47.5px;transform:scaleX(0.983);transform-origin:left center;">You can also pass this to Lip Sync or other operations</div><div class="t" style="top:52.1px;font-size:23px;line-height:23px;color:#0a0a0a;font-weight:700;left:1139.3px;transform:scaleX(0.983);transform-origin:left center;filter:blur(0.3px);">Example of getting voices and then sending a TTS request to Google Cloud</div><div class="t" style="top:50.3px;font-size:23px;line-height:23px;color:#ececec;font-weight:700;left:1137.5px;transform:scaleX(0.983);transform-origin:left center;">Example of getting voices and then sending a TTS request to Google Cloud</div><div class="t" style="top:157.8px;font-size:12px;line-height:12px;color:#d4d4d4;font-weight:700;left:131.0px;">Create Runtime Audio Importer</div><div class="t" style="top:218.8px;font-size:12px;line-height:12px;color:#e6e6e6;left:-1189.0px;width:1500px;text-align:right;">Return Value</div><div class="t" style="top:176.8px;font-size:12px;line-height:12px;color:#c6c6c6;font-weight:700;left:-218.0px;width:1500px;text-align:center;">SET</div><div class="t" style="top:218.8px;font-size:12px;line-height:12px;color:#e6e6e6;left:473.0px;">Audio Importer</div><div class="t" style="top:157.8px;font-size:12px;line-height:12px;color:#d4d4d4;font-weight:700;left:771.0px;">Bind Event to On Result</div><div class="t" style="top:218.8px;font-size:12px;line-height:12px;color:#e6e6e6;left:775.0px;">Target</div><div class="t" style="top:248.8px;font-size:12px;line-height:12px;color:#e6e6e6;left:771.0px;">Event</div><div class="t" style="top:429.8px;font-size:12px;line-height:12px;color:#e4e4e4;font-weight:700;left:99.0px;">OnResult_Event</div><div class="t" style="top:445.8px;font-size:12px;line-height:12px;color:#c8926a;font-style:italic;left:99.0px;">Custom Event</div><div class="t" style="top:505.8px;font-size:12px;line-height:12px;color:#e6e6e6;left:-1300.0px;width:1500px;text-align:right;">Importer</div><div class="t" style="top:535.8px;font-size:12px;line-height:12px;color:#e6e6e6;left:-1300.0px;width:1500px;text-align:right;">Imported Sound Wave</div><div class="t" style="top:565.8px;font-size:12px;line-height:12px;color:#e6e6e6;left:-1300.0px;width:1500px;text-align:right;">Status</div><div class="t" style="top:554.4px;font-size:10.5px;line-height:10.5px;color:#c4c4c4;left:343.0px;">Success</div><div class="t" style="top:445.6px;font-size:12px;line-height:12px;color:#d0d0d0;font-weight:700;left:691.0px;">Branch</div><div class="t" style="top:475.8px;font-size:12px;line-height:12px;color:#e6e6e6;left:-691.0px;width:1500px;text-align:right;">True</div><div class="t" style="top:506.8px;font-size:12px;line-height:12px;color:#e6e6e6;left:695.0px;">Condition</div><div class="t" style="top:506.8px;font-size:12px;line-height:12px;color:#e6e6e6;left:-691.0px;width:1500px;text-align:right;">False</div><div class="t" style="top:446.8px;font-size:12px;line-height:12px;color:#d4d4d4;font-weight:700;left:947.0px;">Play Sound 2D</div><div class="t" style="top:506.8px;font-size:12px;line-height:12px;color:#e6e6e6;left:951.0px;">Sound</div><div class="t" style="top:157.8px;font-size:12px;line-height:12px;color:#d4d4d4;font-weight:700;left:1187.0px;">Get Google Cloud Voices</div><div class="t" style="top:218.8px;font-size:12px;line-height:12px;color:#e6e6e6;left:1191.0px;">Language Code (Optional)</div><div class="t" style="top:235.7px;font-size:12px;line-height:12px;color:#cfcfcf;left:1202.0px;">en-US</div><div class="t" style="top:218.8px;font-size:12px;line-height:12px;color:#e6e6e6;left:-68.0px;width:1500px;text-align:right;">Async Action</div><div class="t" style="top:249.8px;font-size:12px;line-height:12px;color:#e6e6e6;left:-64.0px;width:1500px;text-align:right;">On Complete</div><div class="t" style="top:280.8px;font-size:12px;line-height:12px;color:#e6e6e6;left:-63.0px;width:1500px;text-align:right;">Voices</div><div class="t" style="top:310.8px;font-size:12px;line-height:12px;color:#e6e6e6;left:-68.0px;width:1500px;text-align:right;">Error Status</div><div class="t" style="top:299.9px;font-size:27.3px;line-height:27.3px;color:#a0a0a0;font-weight:700;left:861.5px;width:1500px;text-align:center;transform:scaleX(0.73);transform-origin:center center;">Error</div><div class="t" style="top:221.6px;font-size:12px;line-height:12px;color:#d0d0d0;font-weight:700;left:1779.0px;">Branch</div><div class="t" style="top:250.8px;font-size:12px;line-height:12px;color:#e6e6e6;left:398.0px;width:1500px;text-align:right;">True</div><div class="t" style="top:282.8px;font-size:12px;line-height:12px;color:#e6e6e6;left:1783.0px;">Condition</div><div class="t" style="top:282.8px;font-size:12px;line-height:12px;color:#e6e6e6;left:398.0px;width:1500px;text-align:right;">False</div><div class="t" style="top:413.0px;font-size:13px;line-height:13px;color:#bcbcbc;left:1522.0px;">Use the first available voice for testing purposes</div><div class="t" style="top:467.2px;font-size:26.3px;line-height:26.3px;color:#9ea2aa;font-weight:700;left:852.3px;width:1500px;text-align:center;transform:scaleX(0.79);transform-origin:center center;">GET</div><div class="t" style="top:488.7px;font-size:12px;line-height:12px;color:#cfcfcf;left:1553.0px;">0</div><div class="t" style="top:445.8px;font-size:12px;line-height:12px;color:#ccd1d8;font-weight:700;left:1764.0px;">Break Chatbot Integrator Google Cloud Voice Info</div><div class="t" style="top:474.8px;font-size:12px;line-height:12px;color:#e6e6e6;left:1767.0px;">Chatbot Integrator Google Cloud Voice Info</div><div class="t" style="top:474.8px;font-size:12px;line-height:12px;color:#e6e6e6;left:670.0px;width:1500px;text-align:right;">Name</div><div class="t" style="top:504.8px;font-size:12px;line-height:12px;color:#e6e6e6;left:670.0px;width:1500px;text-align:right;">Language Codes</div><div class="t" style="top:534.8px;font-size:12px;line-height:12px;color:#e6e6e6;left:670.0px;width:1500px;text-align:right;">SSMLGender</div><div class="t" style="top:564.8px;font-size:12px;line-height:12px;color:#e6e6e6;left:670.0px;width:1500px;text-align:right;">Natural Sample Rate Hertz</div><div class="t" style="top:325.8px;font-size:12px;line-height:12px;color:#ccd1d8;font-weight:700;left:2275.0px;">Make Chatbot Integrator Google Cloud TTSSettings</div><div class="t" style="top:353.8px;font-size:12px;line-height:12px;color:#e6e6e6;left:1248.0px;width:1500px;text-align:right;">Chatbot Integrator Google Cloud TTSSettings</div><div class="t" style="top:353.8px;font-size:12px;line-height:12px;color:#e6e6e6;left:2279.0px;">Text</div><div class="t" style="top:370.7px;font-size:12px;line-height:12px;color:#cfcfcf;left:2289.0px;">Hi, this is my speech</div><div class="t" style="top:404.8px;font-size:12px;line-height:12px;color:#e6e6e6;left:2279.0px;">SSML</div><div class="t" style="top:439.8px;font-size:12px;line-height:12px;color:#e6e6e6;left:2279.0px;">Language Code</div><div class="t" style="top:440.2px;font-size:12px;line-height:12px;color:#cfcfcf;left:2375.0px;">en-US</div><div class="t" style="top:472.8px;font-size:12px;line-height:12px;color:#e6e6e6;left:2279.0px;">Voice Name</div><div class="t" style="top:504.8px;font-size:12px;line-height:12px;color:#e6e6e6;left:2279.0px;">Model Name</div><div class="t" style="top:536.8px;font-size:12px;line-height:12px;color:#e6e6e6;left:2279.0px;">SSMLGender</div><div class="t" style="top:560.4px;font-size:10.5px;line-height:10.5px;color:#c4c4c4;left:2295.0px;">Unspecified</div><div class="t" style="top:595.8px;font-size:12px;line-height:12px;color:#e6e6e6;left:2279.0px;">Audio Encoding</div><div class="t" style="top:618.4px;font-size:10.5px;line-height:10.5px;color:#c4c4c4;left:2295.0px;">MP3</div><div class="t" style="top:656.8px;font-size:12px;line-height:12px;color:#e6e6e6;left:2279.0px;">Speaking Rate</div><div class="t" style="top:656.7px;font-size:12px;line-height:12px;color:#cfcfcf;left:2368.0px;">1.0</div><div class="t" style="top:691.8px;font-size:12px;line-height:12px;color:#e6e6e6;left:2279.0px;">Pitch</div><div class="t" style="top:691.7px;font-size:12px;line-height:12px;color:#cfcfcf;left:2317.0px;">0.0</div><div class="t" style="top:725.8px;font-size:12px;line-height:12px;color:#e6e6e6;left:2279.0px;">Volume Gain Db</div><div class="t" style="top:725.7px;font-size:12px;line-height:12px;color:#cfcfcf;left:2376.0px;">0.0</div><div class="t" style="top:760.8px;font-size:12px;line-height:12px;color:#e6e6e6;left:2279.0px;">Sample Rate Hertz</div><div class="t" style="top:760.7px;font-size:12px;line-height:12px;color:#cfcfcf;left:2388.0px;">0</div><div class="t" style="top:793.8px;font-size:12px;line-height:12px;color:#e6e6e6;left:2275.0px;">Effects Profile Ids</div><div class="t" style="top:254.8px;font-size:12px;line-height:12px;color:#d4d4d4;font-weight:700;left:2851.0px;">Send Google Cloud TTS Request</div><div class="t" style="top:314.8px;font-size:12px;line-height:12px;color:#e6e6e6;left:2855.0px;">TTS Settings</div><div class="t" style="top:314.8px;font-size:12px;line-height:12px;color:#e6e6e6;left:1534.0px;width:1500px;text-align:right;">Async Action</div><div class="t" style="top:345.8px;font-size:12px;line-height:12px;color:#e6e6e6;left:1537.0px;width:1500px;text-align:right;">On Complete</div><div class="t" style="top:376.8px;font-size:12px;line-height:12px;color:#e6e6e6;left:1537.0px;width:1500px;text-align:right;">Audio Data</div><div class="t" style="top:406.8px;font-size:12px;line-height:12px;color:#e6e6e6;left:1534.0px;width:1500px;text-align:right;">Error Status</div><div class="t" style="top:396.4px;font-size:27.3px;line-height:27.3px;color:#a0a0a0;font-weight:700;left:2589.5px;width:1500px;text-align:center;transform:scaleX(0.73);transform-origin:center center;">Error</div><div class="t" style="top:317.6px;font-size:12px;line-height:12px;color:#d0d0d0;font-weight:700;left:3507.0px;">Branch</div><div class="t" style="top:346.8px;font-size:12px;line-height:12px;color:#e6e6e6;left:2126.0px;width:1500px;text-align:right;">True</div><div class="t" style="top:378.8px;font-size:12px;line-height:12px;color:#e6e6e6;left:3511.0px;">Condition</div><div class="t" style="top:378.8px;font-size:12px;line-height:12px;color:#e6e6e6;left:2126.0px;width:1500px;text-align:right;">False</div><div class="t" style="top:410.8px;font-size:12px;line-height:12px;color:#e6e6e6;left:3705.5px;">Audio Importer</div><div class="t" style="top:333.8px;font-size:12px;line-height:12px;color:#d4d4d4;font-weight:700;left:3875.0px;">Import Audio from Buffer</div><div class="t" style="top:349.8px;font-size:12px;line-height:12px;color:#a4ac98;font-style:italic;left:3875.0px;">Target is Runtime Audio Importer Library</div><div class="t" style="top:409.8px;font-size:12px;line-height:12px;color:#e6e6e6;left:3879.0px;">Target</div><div class="t" style="top:439.8px;font-size:12px;line-height:12px;color:#e6e6e6;left:3875.0px;">Audio Data</div><div class="t" style="top:469.8px;font-size:12px;line-height:12px;color:#e6e6e6;left:3879.0px;">Audio Format</div><div class="t" style="top:492.4px;font-size:10.5px;line-height:10.5px;color:#c4c4c4;left:3895.0px;">mp3</div></body></html>
